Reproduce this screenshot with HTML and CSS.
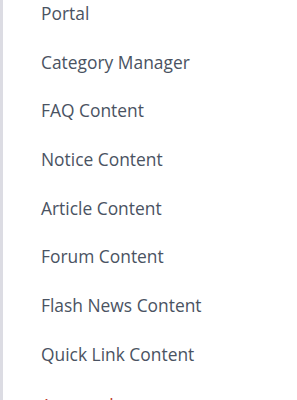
FILE: index.html
```html
<!DOCTYPE html>
<html>
<head>
<meta charset="utf-8">
<link rel="stylesheet" href="styles.css">
</head>
<body>
<nav class="sidebar">
  <ul class="menu">
    <li class="item"><a href="#">Portal</a></li>
    <li class="item"><a href="#">Category Manager</a></li>
    <li class="item"><a href="#">FAQ Content</a></li>
    <li class="item"><a href="#">Notice Content</a></li>
    <li class="item"><a href="#">Article Content</a></li>
    <li class="item"><a href="#">Forum Content</a></li>
    <li class="item"><a href="#">Flash News Content</a></li>
    <li class="item"><a href="#">Quick Link Content</a></li>
    <li class="item active"><a href="#">Approvals</a></li>
  </ul>
</nav>
</body>
</html>
```
FILE: styles.css
```css
html, body {
  margin: 0;
  padding: 0;
  background: #ffffff;
  overflow: hidden;
}
.sidebar {
  height: 400px;
  border-left: 3px solid #dcdce3;
  box-sizing: border-box;
  overflow: hidden;
}
.menu {
  list-style: none;
  margin: -11.5px 0 0 0;
  padding: 0;
}
.item {
  height: 48.7px;
  display: flex;
  align-items: center;
  padding-left: 38px;
}
.item a {
  font-family: "Open Sans", "Noto Sans", sans-serif;
  font-size: 17.4px;
  color: #4a5362;
  text-decoration: none;
}
.item.active {
  margin-top: 2.5px;
}
.item.active a {
  color: #c0392b;
}
```
